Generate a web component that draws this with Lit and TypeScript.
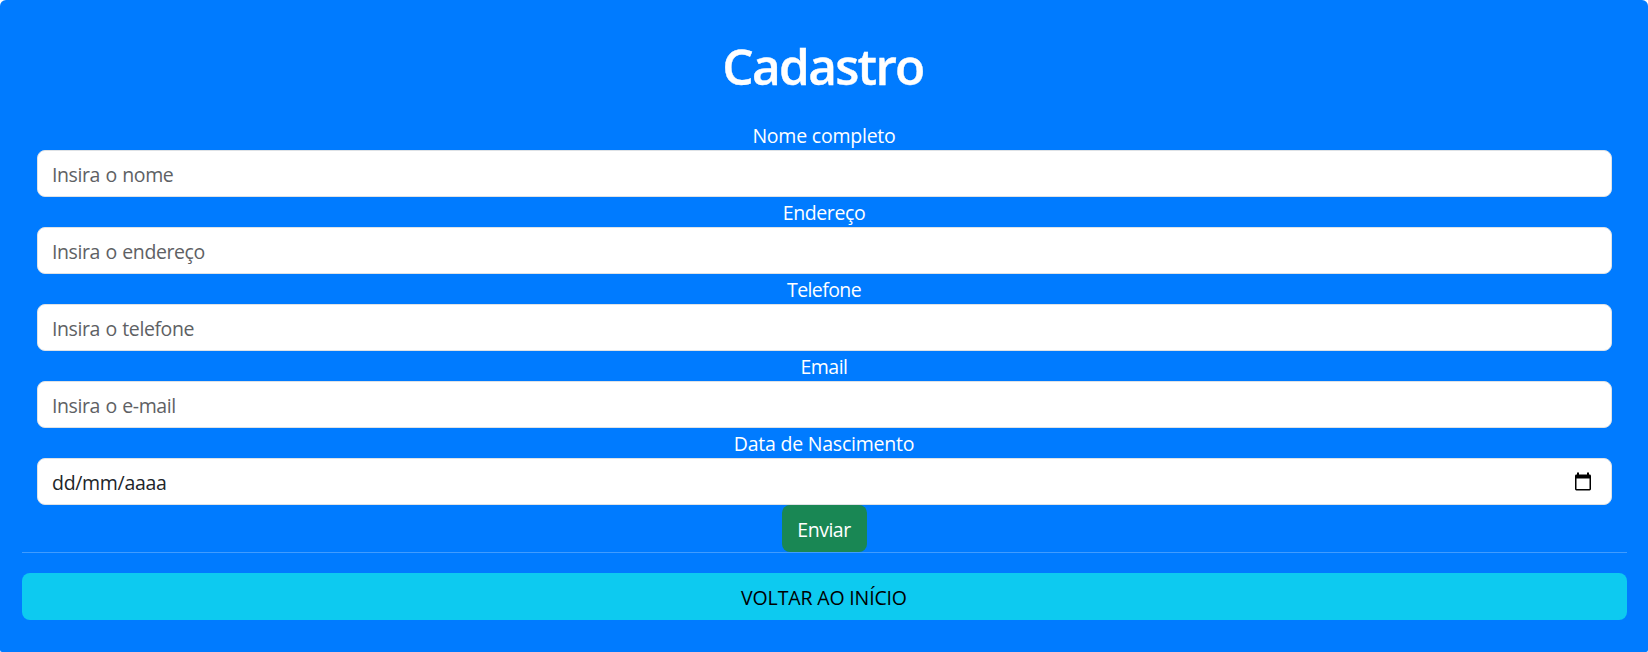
import { LitElement, html, css, nothing } from "lit";
import { customElement } from "lit/decorators.js";
import { classMap } from "lit/directives/class-map.js";

interface Field {
  id: string;
  label: string;
  hint: string;
  date?: boolean;
}

const FIELDS: Field[] = [
  { id: "nome", label: "Nome completo", hint: "Insira o nome" },
  { id: "endereco", label: "Endereço", hint: "Insira o endereço" },
  { id: "telefone", label: "Telefone", hint: "Insira o telefone" },
  { id: "email", label: "Email", hint: "Insira o e-mail" },
  { id: "nascimento", label: "Data de Nascimento", hint: "dd/mm/aaaa", date: true },
];

@customElement("app-root")
export class AppRoot extends LitElement {
  static styles = css`
    :host {
      display: block;
      font-family: "Open Sans", "Noto Sans", sans-serif;
      font-size: 19.5px;
      line-height: 30px;
      color: #fff;
    }
    * { box-sizing: border-box; }
    .card {
      height: 652px;
      padding: 30px 21px 0 22px;
      background: #007bff;
      border-radius: 6px 6px 2px 2px;
      overflow: hidden;
    }
    .title {
      margin: 0;
      height: 91px;
      padding: 6px 3px 0 0;
      font-size: 49.5px;
      line-height: 60px;
      font-weight: 600;
      letter-spacing: -1.7px;
      -webkit-text-stroke: 0.4px #fff;
      text-align: center;
    }
    .form {
      display: flex;
      flex-direction: column;
      align-items: center;
      margin-top: -1px;
      padding: 0 15px;
    }
    .field { width: 100%; }
    .label {
      display: block;
      height: 30px;
      padding: 1px 1px 0 0;
      text-align: center;
      letter-spacing: -0.22px;
    }
    .label.endereco { letter-spacing: -0.4px; }
    .label.telefone { letter-spacing: -0.6px; }
    .label.email { letter-spacing: -0.55px; }
    .box {
      display: flex;
      align-items: center;
      height: 47px;
      padding: 2px 19px 0 14px;
      background: #fff;
      border: 1px solid #dee2e6;
      border-radius: 8px;
    }
    .input {
      flex: 1;
      min-width: 0;
      height: 30px;
      padding: 0;
      border: 0;
      outline: 0;
      background: none;
      font: inherit;
      letter-spacing: -0.4px;
      word-spacing: 0.8px;
      color: #212529;
    }
    .input::placeholder { color: #5e6164; opacity: 1; }
    .date .input { letter-spacing: -0.3px; }
    .date .input::placeholder { color: #212529; }
    .icon { display: block; width: 18px; height: 20px; margin-top: -2px; }
    .button {
      height: 47px;
      padding: 2px 0 0;
      border: 0;
      border-radius: 8px;
      font: inherit;
      text-align: center;
    }
    .send {
      width: 85px;
      padding-right: 1px;
      background: #198754;
      color: #fff;
      letter-spacing: -0.5px;
    }
    .rule {
      height: 1px;
      margin: 0 0 20px;
      border: 0;
      background: #409cff;
    }
    .back {
      display: block;
      width: 100%;
      padding-right: 1px;
      background: #0dcaf0;
      color: #000;
      letter-spacing: -0.15px;
    }
  `;

  private renderField(f: Field) {
    return html`
      <div class="field">
        <label class=${classMap({ label: true, [f.id]: true })} for=${f.id}>${f.label}</label>
        <div class=${classMap({ box: true, date: !!f.date })}>
          <input class="input" id=${f.id} type="text" placeholder=${f.hint} />
          ${f.date
            ? html`<svg class="icon" viewBox="0 0 18 20">
                <path d="M3 0.5h2v2h8v-2h2v2h0.6a1.4 1.4 0 0 1 1.4 1.4v13.2a1.4 1.4 0 0 1-1.4 1.4H2.4A1.4 1.4 0 0 1 1 17.1V3.9A1.4 1.4 0 0 1 2.4 2.5H3zM2.5 6.5V17h13V6.5z" fill="#000" fill-rule="evenodd" />
              </svg>`
            : nothing}
        </div>
      </div>
    `;
  }

  render() {
    return html`
      <main class="card">
        <h1 class="title">Cadastro</h1>
        <form class="form">
          ${FIELDS.map((f) => this.renderField(f))}
          <button class="button send" type="button">Enviar</button>
        </form>
        <hr class="rule" />
        <button class="button back" type="button">VOLTAR AO INÍCIO</button>
      </main>
    `;
  }
}
